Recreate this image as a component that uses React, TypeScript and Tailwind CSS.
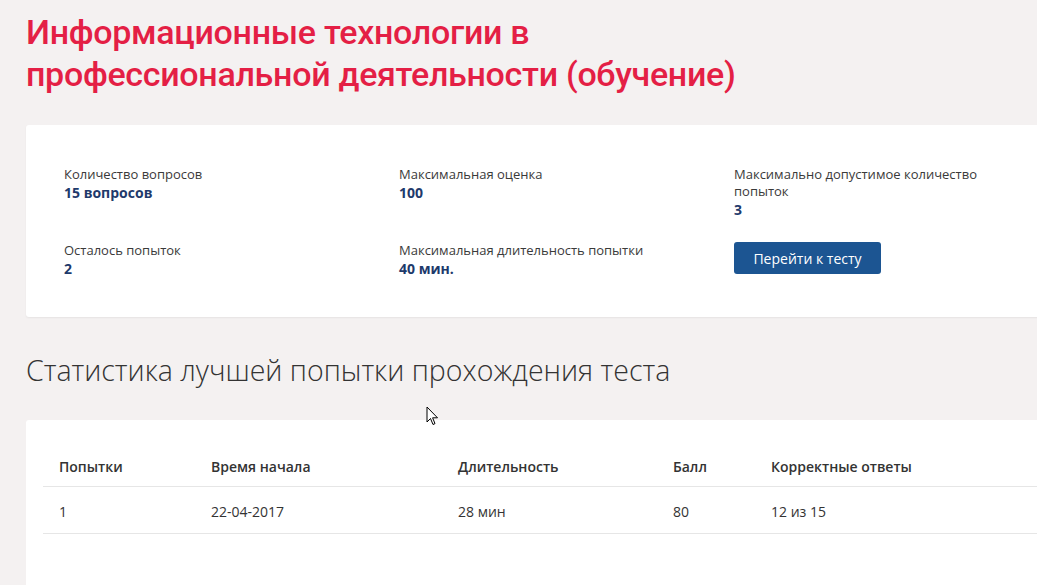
import React from 'react'

type Stat = { label: string; value: string }

const columns: Stat[][] = [
  [
    { label: 'Количество вопросов', value: '15 вопросов' },
    { label: 'Осталось попыток', value: '2' },
  ],
  [
    { label: 'Максимальная оценка', value: '100' },
    { label: 'Максимальная длительность попытки', value: '40 мин.' },
  ],
]

const attempts = [{ n: '1', start: '22-04-2017', dur: '28 мин', score: '80', correct: '12 из 15' }]

function StatItem({ s }: { s: Stat }) {
  return (
    <div className="h-[77px]">
      <div className="text-[13px] leading-[17px] text-[#3a3a3a]">{s.label}</div>
      <div className="text-[14px] leading-[19px] font-bold text-[#1e3a6b]">{s.value}</div>
    </div>
  )
}

function Cursor() {
  return (
    <svg className="absolute left-[426px] top-[406px]" width="13" height="20" viewBox="0 0 13 20">
      <path d="M1 1 L1 16 L4.5 12.5 L7 18.5 L9 17.6 L6.6 11.8 L11.5 11.8 Z" fill="#fff" stroke="#000" strokeWidth="1" strokeLinejoin="round" />
    </svg>
  )
}

export default function App() {
  return (
    <div
      className="relative w-[1037px] h-[585px] overflow-hidden bg-[#f4f1f1] text-[#333]"
      style={{ fontFamily: '"Open Sans", "Noto Sans", sans-serif' }}
    >
      {/* Title */}
      <h1
        className="pl-[26px] pt-[11px] text-[34px] leading-[42px] font-medium text-[#e41f45] tracking-[-0.3px]"
        style={{ fontFamily: 'Roboto, "Noto Sans", sans-serif' }}
      >
        Информационные технологии в
        <br />
        профессиональной деятельности (обучение)
      </h1>

      {/* Info card */}
      <div className="ml-[26px] mt-[30px] w-[1100px] h-[192px] bg-white rounded-[3px] shadow-[0_1px_2px_rgba(0,0,0,0.06)] pl-[38px] pt-[41px] flex">
        {columns.map((col, i) => (
          <div key={i} className="w-[335px] flex flex-col">
            {col.map((s) => (
              <StatItem key={s.label} s={s} />
            ))}
          </div>
        ))}
        <div className="w-[250px] flex flex-col">
          <div className="h-[76px]">
            <div className="text-[13px] leading-[17px] text-[#3a3a3a]">Максимально допустимое количество попыток</div>
            <div className="text-[14px] leading-[19px] font-bold text-[#1e3a6b]">3</div>
          </div>
          <div>
            <button className="h-[32px] w-[147px] rounded-[3px] bg-[#1c5592] text-white text-[14px]">Перейти к тесту</button>
          </div>
        </div>
      </div>

      {/* Stats heading */}
      <h2 className="pl-[26px] mt-[34px] text-[28.5px] leading-[38px] font-light text-[#333]">
        Статистика лучшей попытки прохождения теста
      </h2>

      {/* Table card */}
      <div className="ml-[26px] mt-[31px] w-[1100px] h-[200px] bg-white rounded-[3px] pl-[17px] pt-[36px]">
        <table className="w-[1000px] border-collapse text-[14px]">
          <thead>
            <tr className="border-b border-[#e6e6e6]">
              <th className="w-[168px] pl-[16px] h-[30px] text-left font-semibold align-top">Попытки</th>
              <th className="w-[247px] text-left font-semibold align-top">Время начала</th>
              <th className="w-[215px] text-left font-semibold align-top">Длительность</th>
              <th className="w-[98px] text-left font-semibold align-top">Балл</th>
              <th className="text-left font-semibold align-top">Корректные ответы</th>
            </tr>
          </thead>
          <tbody>
            {attempts.map((a) => (
              <tr key={a.n} className="border-b border-[#e6e6e6] [&>td]:pt-[3px]">
                <td className="pl-[16px] h-[47px]">{a.n}</td>
                <td>{a.start}</td>
                <td>{a.dur}</td>
                <td>{a.score}</td>
                <td>{a.correct}</td>
              </tr>
            ))}
          </tbody>
        </table>
      </div>

      <Cursor />
    </div>
  )
}
